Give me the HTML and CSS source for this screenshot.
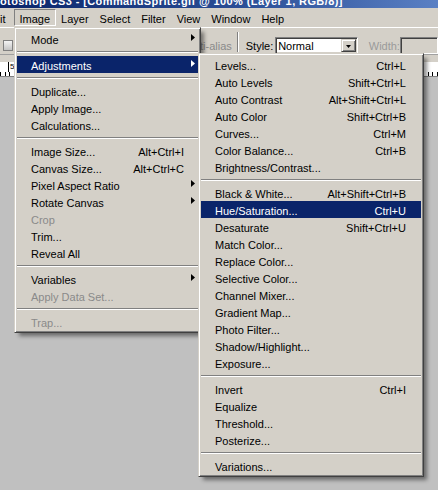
FILE: index.html
```html
<!DOCTYPE html>
<html>
<head>
<meta charset="utf-8">
<title>Photoshop Image menu</title>
<link rel="stylesheet" href="styles.css">
</head>
<body>
<div class="titlebar"><span class="title">otoshop CS3 - [CommandSprite.gif @ 100% (Layer 1, RGB/8)]</span></div>
<div class="menubar">
  <span class="mb cut">it</span>
  <span class="mb pressed">Image</span>
  <span class="mb">Layer</span>
  <span class="mb">Select</span>
  <span class="mb">Filter</span>
  <span class="mb">View</span>
  <span class="mb">Window</span>
  <span class="mb">Help</span>
</div>
<div class="options">
  <span class="opt-btn"></span>
  <span class="opt-label aa">Anti-alias</span>
  <span class="opt-sep"></span>
  <span class="opt-label style">Style:</span>
  <span class="select">
    <span class="select-val">Normal</span>
    <span class="select-btn"><svg width="5" height="3" viewBox="0 0 5 3"><polygon points="0,0 5,0 2.5,3" fill="#000"/></svg></span>
  </span>
  <span class="opt-label wlabel">Width:</span>
  <span class="width-box"></span>
</div>
<div class="gap"></div>
<div class="ruler"><span class="ruler-mark">5</span></div>

<div class="menu main">
  <div class="mi"><span class="lbl">Mode</span><svg class="arr" width="4" height="7" viewBox="0 0 4 7"><polygon points="0,0 4,3.5 0,7"/></svg></div>
  <div class="msep"></div>
  <div class="mi hl"><span class="lbl">Adjustments</span><svg class="arr" width="4" height="7" viewBox="0 0 4 7"><polygon points="0,0 4,3.5 0,7"/></svg></div>
  <div class="msep"></div>
  <div class="mi"><span class="lbl">Duplicate...</span></div>
  <div class="mi"><span class="lbl">Apply Image...</span></div>
  <div class="mi"><span class="lbl">Calculations...</span></div>
  <div class="msep"></div>
  <div class="mi"><span class="lbl">Image Size...</span><span class="sc">Alt+Ctrl+I</span></div>
  <div class="mi"><span class="lbl">Canvas Size...</span><span class="sc">Alt+Ctrl+C</span></div>
  <div class="mi"><span class="lbl">Pixel Aspect Ratio</span><svg class="arr" width="4" height="7" viewBox="0 0 4 7"><polygon points="0,0 4,3.5 0,7"/></svg></div>
  <div class="mi"><span class="lbl">Rotate Canvas</span><svg class="arr" width="4" height="7" viewBox="0 0 4 7"><polygon points="0,0 4,3.5 0,7"/></svg></div>
  <div class="mi dis"><span class="lbl">Crop</span></div>
  <div class="mi"><span class="lbl">Trim...</span></div>
  <div class="mi"><span class="lbl">Reveal All</span></div>
  <div class="msep"></div>
  <div class="mi"><span class="lbl">Variables</span><svg class="arr" width="4" height="7" viewBox="0 0 4 7"><polygon points="0,0 4,3.5 0,7"/></svg></div>
  <div class="mi dis"><span class="lbl">Apply Data Set...</span></div>
  <div class="msep"></div>
  <div class="mi dis"><span class="lbl">Trap...</span></div>
</div>

<div class="menu sub">
  <div class="mi"><span class="lbl">Levels...</span><span class="sc">Ctrl+L</span></div>
  <div class="mi"><span class="lbl">Auto Levels</span><span class="sc">Shift+Ctrl+L</span></div>
  <div class="mi"><span class="lbl">Auto Contrast</span><span class="sc">Alt+Shift+Ctrl+L</span></div>
  <div class="mi"><span class="lbl">Auto Color</span><span class="sc">Shift+Ctrl+B</span></div>
  <div class="mi"><span class="lbl">Curves...</span><span class="sc">Ctrl+M</span></div>
  <div class="mi"><span class="lbl">Color Balance...</span><span class="sc">Ctrl+B</span></div>
  <div class="mi"><span class="lbl">Brightness/Contrast...</span></div>
  <div class="msep"></div>
  <div class="mi"><span class="lbl">Black &amp; White...</span><span class="sc">Alt+Shift+Ctrl+B</span></div>
  <div class="mi hl"><span class="lbl">Hue/Saturation...</span><span class="sc">Ctrl+U</span></div>
  <div class="mi"><span class="lbl">Desaturate</span><span class="sc">Shift+Ctrl+U</span></div>
  <div class="mi"><span class="lbl">Match Color...</span></div>
  <div class="mi"><span class="lbl">Replace Color...</span></div>
  <div class="mi"><span class="lbl">Selective Color...</span></div>
  <div class="mi"><span class="lbl">Channel Mixer...</span></div>
  <div class="mi"><span class="lbl">Gradient Map...</span></div>
  <div class="mi"><span class="lbl">Photo Filter...</span></div>
  <div class="mi"><span class="lbl">Shadow/Highlight...</span></div>
  <div class="mi"><span class="lbl">Exposure...</span></div>
  <div class="msep"></div>
  <div class="mi"><span class="lbl">Invert</span><span class="sc">Ctrl+I</span></div>
  <div class="mi"><span class="lbl">Equalize</span></div>
  <div class="mi"><span class="lbl">Threshold...</span></div>
  <div class="mi"><span class="lbl">Posterize...</span></div>
  <div class="msep"></div>
  <div class="mi"><span class="lbl">Variations...</span></div>
</div>
</body>
</html>
```

FILE: styles.css
```css
* { box-sizing: border-box; }
html, body { margin: 0; padding: 0; }
body {
  width: 438px;
  height: 490px;
  overflow: hidden;
  position: relative;
  background: #c0c0c0;
  font-family: "Liberation Sans", Arial, sans-serif;
  font-size: 11px;
  color: #000;
}

/* title bar (cut at top) */
.titlebar {
  height: 8px;
  overflow: hidden;
  white-space: nowrap;
  background: linear-gradient(90deg, #0a246a 0%, #2a4e96 55%, #5a80c4 100%);
  color: #fff;
  font-weight: bold;
  letter-spacing: 0.4px;
  line-height: 2px;
}

/* menu bar */
.menubar {
  height: 19px;
  padding-top: 1px;
  display: flex;
  background: #d4d0c8;
  white-space: nowrap;
}
.mb {
  height: 17px;
  padding: 2px 4.5px 0;
  line-height: 14px;
  border: 1px solid transparent;
}
.mb.cut { width: 14px; padding: 2px 0 0; border-left: 0; border-right: 0; }
.mb.pressed { border-color: #808080 #fff #fff #808080; }

/* options bar */
.options {
  height: 28px;
  display: flex;
  align-items: flex-start;
  padding-top: 9px;
  background: #d4d0c8;
  border-top: 1px solid #fff;
  border-bottom: 1px solid #a0a0a0;
  white-space: nowrap;
}
.opt-btn {
  width: 10px;
  height: 11px;
  margin: 3px 0 0 3px;
  border: 1px solid #808080;
  background: linear-gradient(#f4f4f4, #c4c4c4);
}
.opt-label {
  height: 17px;
  padding-top: 2px;
  line-height: 14px;
}
.opt-label.aa { width: 53px; margin-left: 174px; color: #8a8a8a; }
.opt-sep {
  width: 2px;
  height: 20px;
  margin-top: -5px;
  border-left: 1px solid #808080;
  border-right: 1px solid #fff;
}
.opt-label.style { width: 38px; padding-left: 7px; }
.select {
  width: 87px;
  height: 17px;
  display: flex;
  padding: 1px;
  background: #fff;
  border: 1px solid;
  border-color: #808080 #fff #fff #808080;
  box-shadow: inset 1px 1px #404040, inset -1px -1px #d4d0c8;
}
.select-val {
  flex: 1;
  padding: 1px 0 0 1px;
  line-height: 12px;
}
.select-btn {
  width: 15px;
  height: 13px;
  display: flex;
  align-items: center;
  justify-content: center;
  padding-top: 2px;
  background: #d4d0c8;
  border: 1px solid;
  border-color: #d4d0c8 #404040 #404040 #d4d0c8;
  box-shadow: inset 1px 1px #fff, inset -1px -1px #808080;
}
.select-btn svg { display: block; }
.opt-label.wlabel { width: 33px; margin-left: 11px; color: #9a9a9a; }
.width-box {
  width: 40px;
  height: 17px;
  background: #d4d0c8;
  border: 1px solid;
  border-color: #808080 #fff #fff #808080;
  box-shadow: inset 1px 1px #404040;
}

.gap { height: 7px; background: #d4d0c8; }

.ruler {
  height: 15px;
  display: flex;
  background:
    repeating-linear-gradient(90deg, #000 0 1px, transparent 1px 4.6px) left bottom / 100% 4px no-repeat,
    #fff;
  border-bottom: 1px solid #808080;
}
.ruler-mark {
  margin-left: 8px;
  height: 15px;
  padding-left: 1px;
  border-left: 1px solid #000;
  font-size: 8px;
  line-height: 9px;
  background: #fff;
  height: 10px;
}

/* popup menus */
.menu {
  position: absolute;
  background: #d4d0c8;
  border: 1px solid;
  border-color: #d4d0c8 #404040 #404040 #d4d0c8;
  padding: 2px;
  box-shadow: inset 1px 1px #fff, inset -1px -1px #808080, 4px 4px 4px -1px rgba(0, 0, 0, 0.45);
  white-space: nowrap;
}
.menu.main { left: 14px; top: 27px; width: 187px; z-index: 1; }
.menu.sub { left: 198px; top: 53px; width: 226px; z-index: 2; }

.mi {
  height: 17px;
  display: flex;
  align-items: flex-start;
  padding: 3px 14px 0;
  line-height: 14px;
}
.menu.sub .mi { padding-right: 15px; }
.mi .lbl { flex: 1; }
.mi .sc { text-align: right; }
.mi .arr { display: block; margin: 1px -11px 0 0; fill: #000; }
.mi.hl { background: #0a246a; color: #fff; }
.mi.hl .arr { fill: #fff; }
.mi.dis { color: #8a8a8a; }

.msep {
  height: 9px;
  background: linear-gradient(transparent 4px, #808080 4px 5px, #fff 5px 6px, transparent 6px);
}
```
